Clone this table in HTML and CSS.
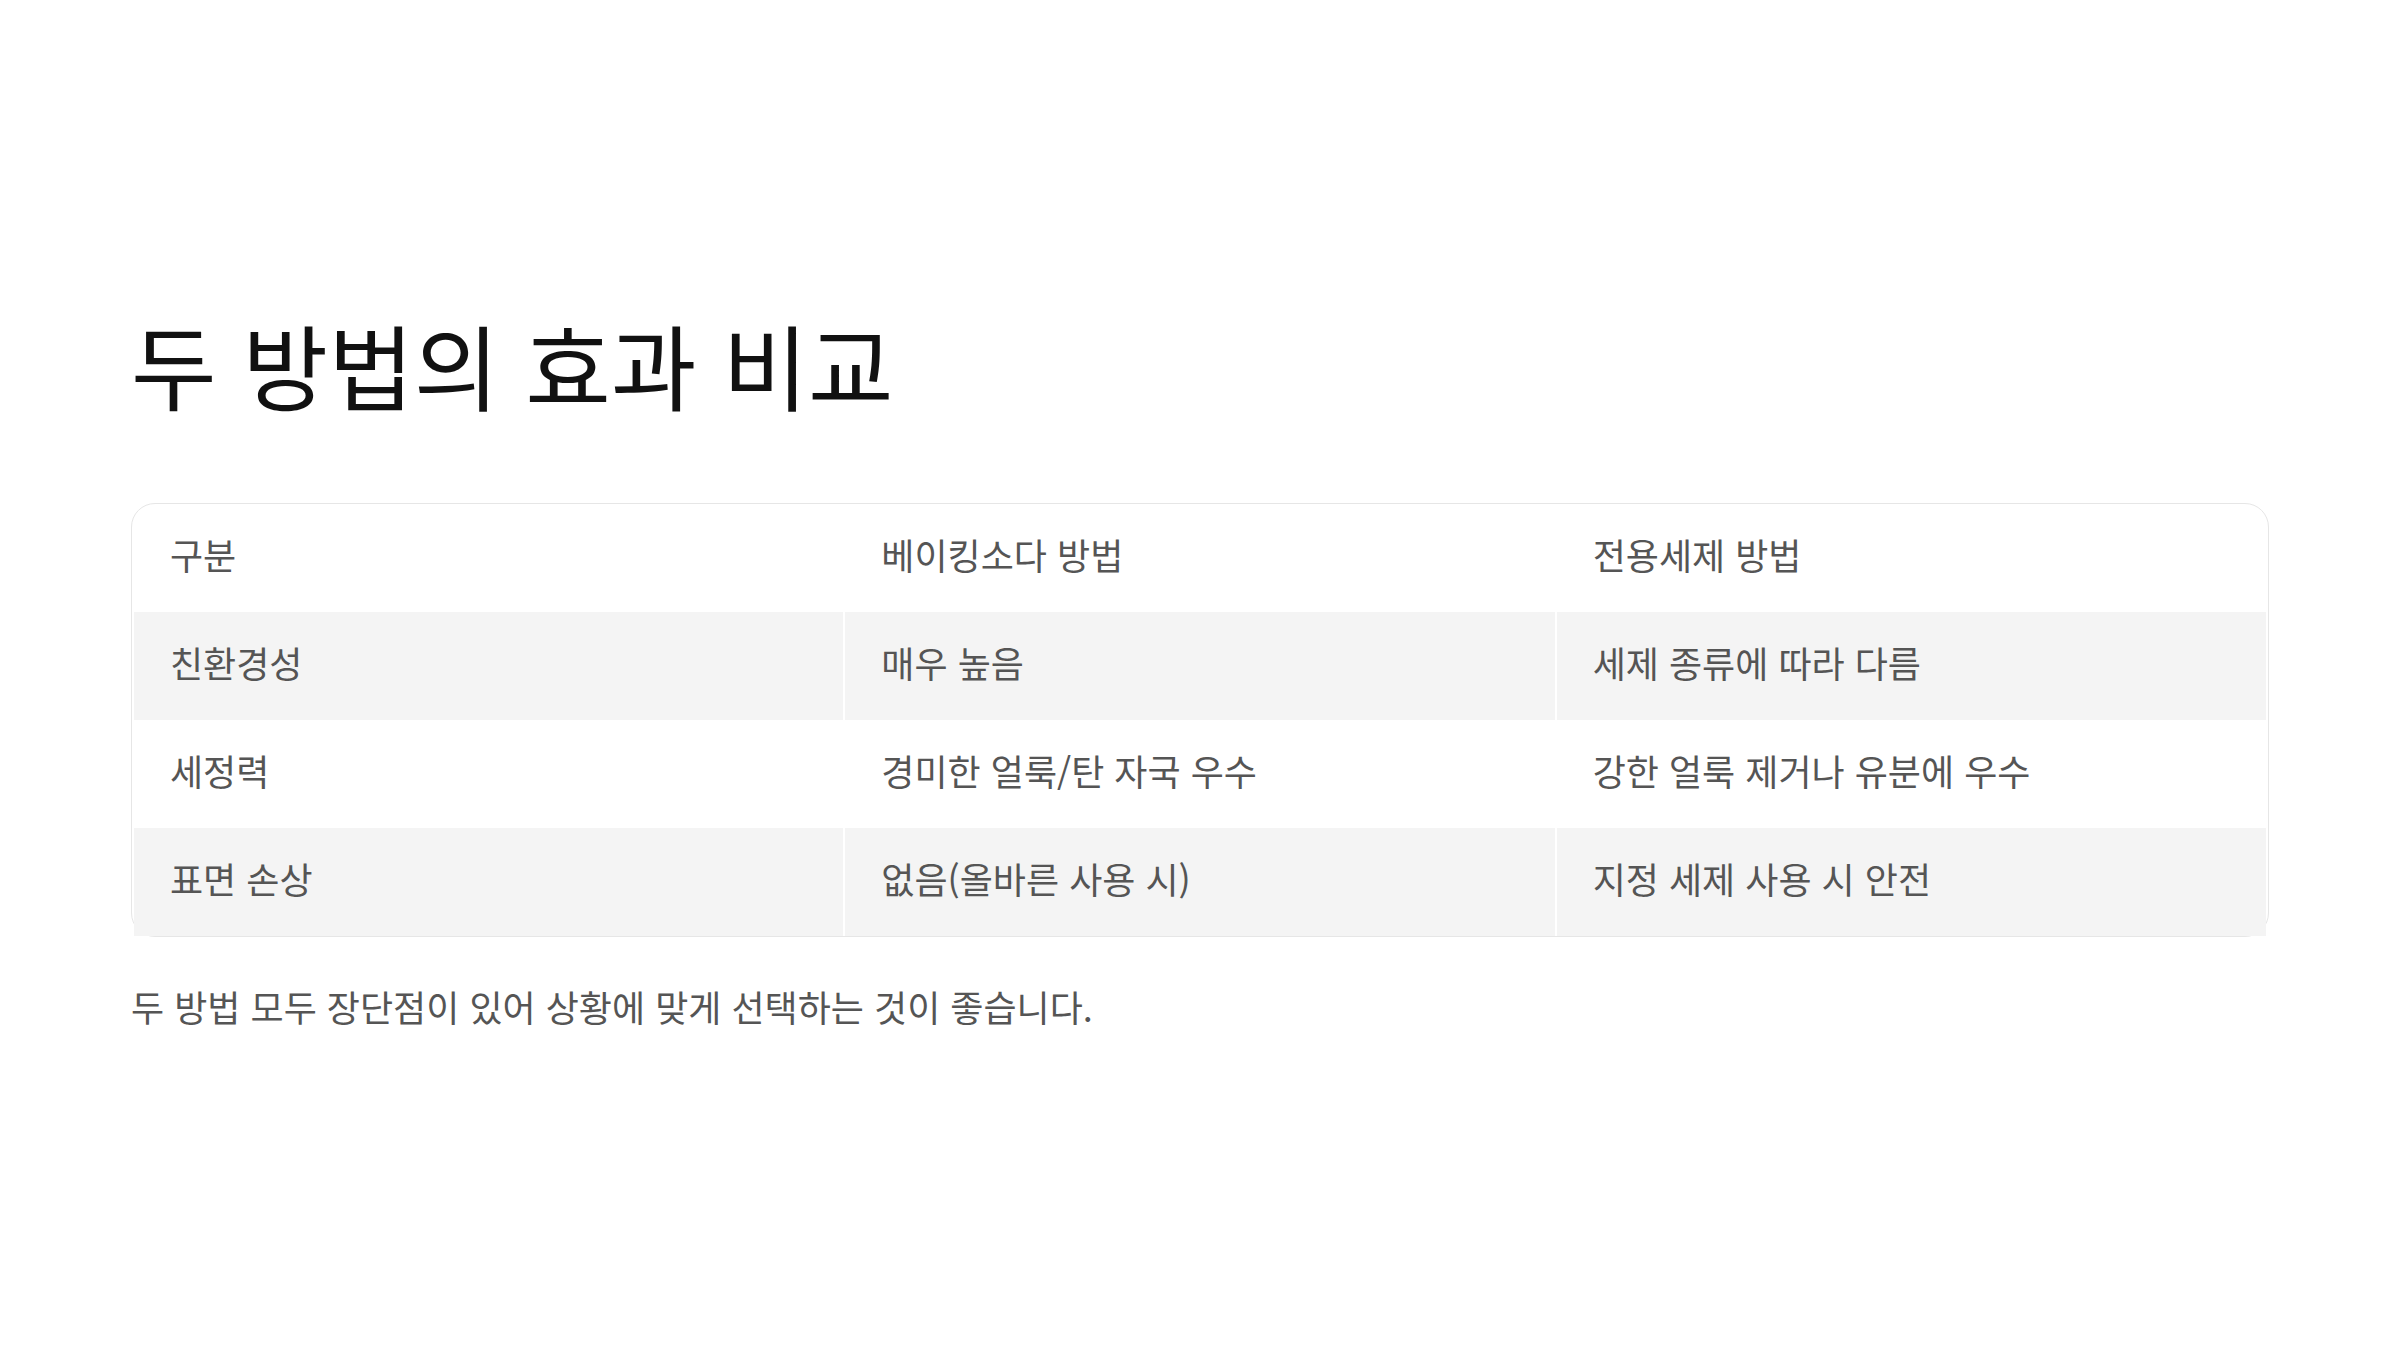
FILE: index.html
```html
<!DOCTYPE html>
<html lang="ko">
<head>
<meta charset="utf-8">
<title>두 방법의 효과 비교</title>
<link rel="stylesheet" href="styles.css">
</head>
<body>
<main class="page">
  <h1 class="title">두 방법의 효과 비교</h1>
  <div class="table-wrap">
    <table class="compare">
      <thead>
        <tr>
          <th>구분</th>
          <th>베이킹소다 방법</th>
          <th>전용세제 방법</th>
        </tr>
      </thead>
      <tbody>
        <tr class="alt">
          <td>친환경성</td>
          <td>매우 높음</td>
          <td>세제 종류에 따라 다름</td>
        </tr>
        <tr>
          <td>세정력</td>
          <td>경미한 얼룩/탄 자국 우수</td>
          <td>강한 얼룩 제거나 유분에 우수</td>
        </tr>
        <tr class="alt">
          <td>표면 손상</td>
          <td>없음(올바른 사용 시)</td>
          <td>지정 세제 사용 시 안전</td>
        </tr>
      </tbody>
    </table>
  </div>
  <p class="note">두 방법 모두 장단점이 있어 상황에 맞게 선택하는 것이 좋습니다.</p>
</main>
</body>
</html>
```

FILE: styles.css
```css
html, body {
  margin: 0;
  padding: 0;
  background: #ffffff;
}

body {
  font-family: "Noto Sans CJK KR", "Noto Sans", sans-serif;
}

.page {
  padding: 308px 131px 0 131px;
}

.title {
  margin: 0 0 83px 0;
  font-size: 93px;
  line-height: 1.2;
  font-weight: 400;
  color: #111111;
}

.table-wrap {
  border: 1px solid #e6e6e6;
  border-radius: 24px;
}

.compare {
  width: 100%;
  table-layout: fixed;
  border-collapse: separate;
  border-spacing: 2px 0;
}

.compare th,
.compare td {
  height: 108px;
  padding: 0 36px 8px 36px;
  box-sizing: border-box;
  text-align: left;
  vertical-align: middle;
  font-size: 36px;
  line-height: 1.5;
  font-weight: 400;
  color: #555555;
}

.compare tr.alt td {
  background: #f4f4f4;
}

.note {
  margin: 42px 0 0 0;
  font-size: 36px;
  line-height: 1.5;
  color: #555555;
}
```
